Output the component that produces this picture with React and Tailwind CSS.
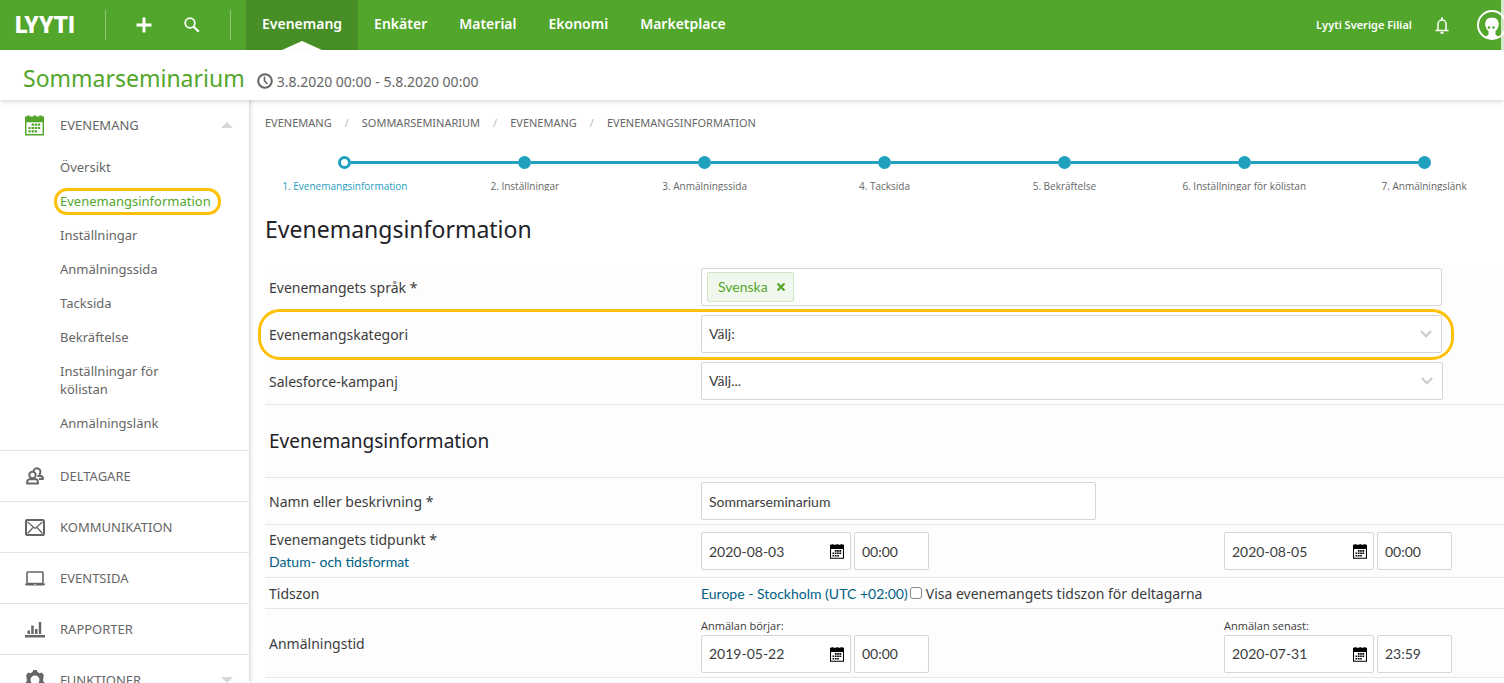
import React, { useState } from 'react';

const TOP_NAV = ['Evenemang', 'Enkäter', 'Material', 'Ekonomi', 'Marketplace'];

const SUB_NAV = [
  'Översikt',
  'Evenemangsinformation',
  'Inställningar',
  'Anmälningssida',
  'Tacksida',
  'Bekräftelse',
  'Inställningar för kölistan',
  'Anmälningslänk',
];

const BREADCRUMBS = ['Evenemang', 'Sommarseminarium', 'Evenemang', 'Evenemangsinformation'];

const STEPS = [
  '1. Evenemangsinformation',
  '2. Inställningar',
  '3. Anmälningssida',
  '4. Tacksida',
  '5. Bekräftelse',
  '6. Inställningar för kölistan',
  '7. Anmälningslänk',
];

const CalendarIcon = ({ className }) => (
  <svg viewBox="0 0 20 21" className={className} fill="currentColor" aria-hidden="true">
    <path fillRule="evenodd" d="M0 1h2V0h3v1h4V0h3v1h3V0h3v1h2v20H0V1zm1.5 6v12.5h17V7h-17z" />
    <path d="M7 8.5h2.4v2.2H7zM10.2 8.5h2.4v2.2h-2.4zM13.4 8.5H16v2.2h-2.6zM3.6 12h2.4v2.2H3.6zM7 12h2.4v2.2H7zM10.2 12h2.4v2.2h-2.4zM13.4 12H16v2.2h-2.6zM3.6 15.6h2.4v2.2H3.6zM7 15.6h2.4v2.2H7zM10.2 15.6h2.4v2.2h-2.4z" />
  </svg>
);

const PeopleIcon = () => (
  <svg viewBox="0 0 20 20" className="w-5 h-5" fill="none" stroke="currentColor" strokeWidth="2" strokeLinejoin="round" aria-hidden="true">
    <circle cx="7.500" cy="9" r="3.200" />
    <path d="M8.500 5.500a3.500 3.500 0 1 1 5.500 3.200M12.500 10h3c2 0 2.500 1.200 2.500 3h-4" />
    <path d="M4.500 13.300h6.500c1.300 0 2 1.500 2 4.200H2c0-2.700 1-4.200 2.500-4.200z" />
  </svg>
);

const MailIcon = () => (
  <svg viewBox="0 0 20 17" className="w-5 h-[17px]" fill="none" stroke="currentColor" aria-hidden="true">
    <rect x="1" y="1" width="18" height="15" rx="1" strokeWidth="2" />
    <path d="M2.500 3l7.500 6.500L17.500 3M2.500 14.500l5.500-6M17.500 14.500l-5.500-6" strokeWidth="1.300" />
  </svg>
);

const LaptopIcon = () => (
  <svg viewBox="0 0 20 15" className="w-5 h-[15px]" aria-hidden="true">
    <rect x="2" y="1" width="16" height="11.500" rx="1" fill="none" stroke="currentColor" strokeWidth="1.600" />
    <path fillRule="evenodd" d="M0 12.500h20v.8c0 .7-.8 1.200-1.500 1.200h-17C.8 14.500 0 14 0 13.300zM9 13v.8h2V13z" fill="currentColor" />
  </svg>
);

const ChartIcon = () => (
  <svg viewBox="0 0 20 17" className="w-5 h-[17px]" fill="currentColor" aria-hidden="true">
    <path d="M0 14h20v2.500H0zM2.500 9.500H5V13H2.500zM6.200 4.500h2.500V13H6.200zM10 8h2.500v5H10zM13.800 1h2.400v12h-2.400z" />
  </svg>
);

const GearIcon = () => (
  <svg viewBox="0 0 20 20" className="w-5 h-5" fill="currentColor" aria-hidden="true">
    <path fillRule="evenodd" d="M7.500 2L8.300 0h3.400l.8 2 2.200 1.200 2.200-.8 2.100 3-.6 1 .1 1.600-.5 2 .5 1.800L20 13l-1.800 3.200-2.300-.2-2.400 1.500-.8 2.500H7.300l-.8-2.500L4.100 16l-2.300.2L0 13l1.500-1.200.5-1.800-.5-2L1.600 6.400 1 5.400l2.100-3 2.200.8zM10 5.500a4.500 4.500 0 1 0 0 9 4.500 4.500 0 0 0 0-9z" />
  </svg>
);

const SECTIONS = [
  { name: 'Deltagare', icon: <PeopleIcon /> },
  { name: 'Kommunikation', icon: <MailIcon /> },
  { name: 'Eventsida', icon: <LaptopIcon /> },
  { name: 'Rapporter', icon: <ChartIcon /> },
  { name: 'Funktioner', icon: <GearIcon />, arrow: true },
];

const Topbar = () => (
  <header className="relative flex h-[50px] shrink-0 items-center bg-[#52a62b] text-white overflow-hidden">
    <a href="#" className="w-[90px] pl-[15px] font-['Roboto',sans-serif] text-[23px] font-black leading-none">LYYTI</a>
    <div className="ml-[15px] flex h-[30px] w-[126px] items-center justify-between border-x border-white/35 pl-[30px] pr-[30px]">
      <button aria-label="Lägg till">
        <svg viewBox="0 0 16 16" className="w-4 h-4" stroke="currentColor" strokeWidth="3" fill="none">
          <path d="M8 0.500v15M0.500 8h15" />
        </svg>
      </button>
      <button aria-label="Sök">
        <svg viewBox="0 0 16 16" className="w-4 h-4" stroke="currentColor" fill="none">
          <circle cx="6" cy="6" r="4.800" strokeWidth="1.800" />
          <path d="M9.500 9.500l5.300 5.300" strokeWidth="2.300" />
        </svg>
      </button>
    </div>
    <nav className="ml-[15px] flex h-full text-sm font-semibold">
      {TOP_NAV.map((item, i) => (
        <a
          key={item}
          href="#"
          className={`relative flex h-full items-center px-4 pb-[3px] ${i === 0 ? 'bg-[#468e25]' : ''}`}
        >
          {item}
          {i === 0 && (
            <svg viewBox="0 0 40 9" className="absolute bottom-0 left-1/2 h-[9px] w-10 -translate-x-1/2" fill="#fff" aria-hidden="true">
              <path d="M0 9L20 0l20 9z" />
            </svg>
          )}
        </a>
      ))}
    </nav>
    <div className="-mr-[3px] ml-auto flex items-center">
      <span className="text-[11px] font-semibold">Lyyti Sverige Filial</span>
      <button aria-label="Aviseringar" className="ml-[23px]">
        <svg viewBox="0 0 14 17" className="h-[17px] w-[14px]" fill="none" stroke="currentColor" strokeWidth="1.500" aria-hidden="true">
          <path d="M3 13V7a4 4 0 0 1 8 0v6M.5 13.500h13" />
          <path d="M7 0.500v2M5.500 15.700h3" strokeWidth="2" />
        </svg>
      </button>
      <button aria-label="Profil" className="ml-7">
        <svg viewBox="0 0 30 30" className="h-[30px] w-[30px]" aria-hidden="true">
          <circle cx="15" cy="15" r="14" fill="none" stroke="#fff" strokeWidth="2" />
          <path d="M15 7.500c4.200 0 6.800 2.800 6.800 6.500 0 3-1.500 5.300-3.300 7.200v3.500l3.500 2.300c-2 1.500-4.500 2-7 2s-5-.5-7-2l3.500-2.300v-3.500C9.700 19.300 8.200 17 8.200 14c0-3.700 2.600-6.500 6.800-6.500z" fill="#fff" />
          <circle cx="12" cy="17.500" r="1.300" fill="#52a62b" />
          <circle cx="16.500" cy="17.500" r="1.300" fill="#52a62b" />
        </svg>
      </button>
    </div>
    <div className="absolute inset-y-0 right-0 w-[3px] bg-white/75" />
  </header>
);

const Arrow = ({ up }) => (
  <svg viewBox="0 0 12 6" className="ml-auto h-[6px] w-3" fill="#d8d8d8" aria-hidden="true">
    <path d={up ? 'M0 6l6-6 6 6z' : 'M0 0l6 6 6-6z'} />
  </svg>
);

const Sidebar = () => (
  <aside className="w-[249px] shrink-0 bg-white text-[13px] text-[#666] shadow-[1px_0_4px_rgba(0,0,0,0.2)]">
    <button className="flex h-[50px] w-full items-center pl-[25px] pr-4 uppercase">
      <CalendarIcon className="h-[21px] w-[19px] text-[#52a62b]" />
      <span className="ml-4 pt-[2px]">Evenemang</span>
      <Arrow up />
    </button>
    <ul className="pb-[10px] pl-[60px] pr-[50px] leading-[18px]">
      {SUB_NAV.map((item, i) => (
        <li key={item} className="relative py-2">
          {i === 1 && (
            <div className="pointer-events-none absolute -left-[6px] top-1 h-[27px] w-[167px] rounded-[13px] border-[3px] border-[#ffc107]" />
          )}
          <a href="#" className={i === 1 ? 'text-[#52a62b] whitespace-nowrap' : ''}>{item}</a>
        </li>
      ))}
    </ul>
    {SECTIONS.map((s) => (
      <button key={s.name} className="flex h-[51px] w-full items-center border-t border-[#e4e4e4] pl-[25px] pr-4 uppercase">
        {s.icon}
        <span className="ml-[15px] pt-[2px]">{s.name}</span>
        {s.arrow && <Arrow />}
      </button>
    ))}
  </aside>
);

const Steps = () => (
  <ol className="-mx-[10px] mt-[25px] flex">
    {STEPS.map((step, i) => (
      <li key={step} className="flex flex-1 flex-col items-center">
        <div className="flex w-full items-center">
          <div className={`h-[3px] flex-1 ${i === 0 ? '' : 'bg-[#1fa0be]'}`} />
          <div className={`h-[13px] w-[13px] rounded-full border-[3px] border-[#1fa0be] ${i === 0 ? 'bg-white' : 'bg-[#1fa0be]'}`} />
          <div className={`h-[3px] flex-1 ${i === STEPS.length - 1 ? '' : 'bg-[#1fa0be]'}`} />
        </div>
        <a
          href="#"
          className={`mt-[11px] block h-[11px] overflow-hidden whitespace-nowrap font-['Open_Sans',sans-serif] text-[10px] leading-[13px] ${i === 0 ? 'text-[#1fa0be]' : 'text-[#666]'}`}
        >
          {step}
        </a>
      </li>
    ))}
  </ol>
);

const inputStyle = "h-[38px] rounded-[2px] border border-[#d6d6d6] bg-white px-[7px] font-['Lato',sans-serif] text-sm text-[#3c3c3c]";

const Select = ({ id, text }) => (
  <div className="relative">
    <select id={id} className={`${inputStyle} block w-full appearance-none`}>
      <option>{text}</option>
    </select>
    <svg viewBox="0 0 12 8" className="pointer-events-none absolute right-[10px] top-[15px] h-2 w-3" fill="none" stroke="#ccc" strokeWidth="2.200" aria-hidden="true">
      <path d="M0.800 1L6 6.200 11.200 1" />
    </svg>
  </div>
);

const DateTime = ({ name, date, time, caption }) => (
  <div>
    {caption && (
      <label htmlFor={`${name}-date`} className="block h-[17px] font-['Open_Sans',sans-serif] text-[11px] leading-4">{caption}</label>
    )}
    <div className="flex gap-[3px]">
      <div className="relative">
        <input id={`${name}-date`} aria-label={caption || 'Datum'} defaultValue={date} className={`${inputStyle} block w-[150px]`} />
        <CalendarIcon className="pointer-events-none absolute right-[7px] top-3 h-[15px] w-[14px] text-black" />
      </div>
      <input aria-label="Klockslag" defaultValue={time} className={`${inputStyle} w-[75px]`} />
    </div>
  </div>
);

const Row = ({ label, htmlFor, className = '', children }) => (
  <div className={`grid grid-cols-[436px_1fr] items-center ${className}`}>
    <div className="pl-1">{htmlFor ? <label htmlFor={htmlFor}>{label}</label> : label}</div>
    <div>{children}</div>
  </div>
);

const App = () => {
  const [languages, setLanguages] = useState(['Svenska']);

  return (
    <div className="flex h-screen flex-col overflow-hidden bg-white font-['Noto_Sans','Open_Sans',sans-serif] text-[#3c3c3c]">
      <Topbar />

      <div className="relative z-10 flex h-[50px] shrink-0 items-baseline bg-white pl-[23px] pt-3 shadow-[0_2px_4px_rgba(0,0,0,0.14)]">
        <h2 className="text-[23px] leading-8 text-[#52a62b]">Sommarseminarium</h2>
        <svg viewBox="0 0 16 16" className="ml-3 h-4 w-4 self-center" fill="none" stroke="#666" strokeWidth="2" aria-hidden="true">
          <circle cx="8" cy="8" r="6.800" />
          <path d="M7.500 3.500V8l3 3" strokeWidth="1.600" />
        </svg>
        <span className="ml-1 text-sm text-[#666]">3.8.2020 00:00 - 5.8.2020 00:00</span>
      </div>

      <div className="flex min-h-0 flex-1">
        <Sidebar />

        <main className="min-w-0 flex-1 pl-4">
          <nav className="flex pt-[15px] text-[11px] uppercase leading-4 text-[#666]">
            {BREADCRUMBS.map((crumb, i) => (
              <React.Fragment key={i}>
                {i > 0 && <span className="mx-[13px] text-[#bbb]">/</span>}
                <a href="#">{crumb}</a>
              </React.Fragment>
            ))}
          </nav>

          <Steps />

          <h1 className="mt-[22px] text-[23px] leading-8 text-[#1f2328]">Evenemangsinformation</h1>

          <form className="mt-[19px] bg-[#fdfdfd] text-[14px]">
            {/* Språk, kategori och kampanj */}
            <div className="border-b border-[#e6e6e6]">
              <Row label="Evenemangets språk *" className="h-[46px]">
                <div className="mr-[62px] flex h-[38px] items-center rounded-[2px] border border-[#d6d6d6] bg-white pl-[5px]">
                  {languages.map((lang) => (
                    <span key={lang} className="flex h-[30px] items-center rounded-[2px] border border-[#cfe6c5] bg-[#f0f8ed] pl-[10px] pr-2 font-['Lato',sans-serif] text-sm text-[#52a62b]">
                      {lang}
                      <button type="button" aria-label={`Ta bort ${lang}`} className="ml-[9px]" onClick={() => setLanguages(languages.filter((l) => l !== lang))}>
                        <svg viewBox="0 0 8 8" className="h-2 w-2" stroke="currentColor" strokeWidth="2.200">
                          <path d="M0.500 0.500l7 7M7.500 0.500l-7 7" />
                        </svg>
                      </button>
                    </span>
                  ))}
                </div>
              </Row>
              <div className="relative">
                <Row label="Evenemangskategori" htmlFor="category" className="h-12">
                  <div className="mr-[62px]"><Select id="category" text="Välj:" /></div>
                </Row>
                <div className="pointer-events-none absolute -bottom-[2px] -left-[7px] right-[50px] -top-[1px] rounded-[22px] border-[3px] border-[#ffc107]" />
              </div>
              <Row label="Salesforce-kampanj" htmlFor="campaign" className="h-[46px]">
                <div className="mr-[61px]"><Select id="campaign" text="Välj..." /></div>
              </Row>
            </div>

            <h2 className="flex h-[73px] items-center border-b border-[#e6e6e6] pl-1 text-[19px] text-[#1f2328]">Evenemangsinformation</h2>

            <Row label="Namn eller beskrivning *" htmlFor="name" className="h-[47px] border-b border-[#e6e6e6]">
              <input id="name" defaultValue="Sommarseminarium" className={`${inputStyle} block w-[395px]`} />
            </Row>

            <Row
              label={
                <>
                  <div className="leading-[22px]">Evenemangets tidpunkt *</div>
                  <a href="#" className="block font-['Lato',sans-serif] leading-[22px] text-[#005f85]">Datum- och tidsformat</a>
                </>
              }
              className="h-[53px] border-b border-[#e6e6e6]"
            >
              <div className="grid grid-cols-[523px_1fr]">
                <DateTime name="start" date="2020-08-03" time="00:00" />
                <DateTime name="end" date="2020-08-05" time="00:00" />
              </div>
            </Row>

            <Row label="Tidszon" className="h-[31px] border-b border-[#e6e6e6]">
              <div className="flex items-center">
                <a href="#" className="font-['Lato',sans-serif] text-[#005f85]">Europe - Stockholm (UTC +02:00)</a>
                <input id="show-tz" type="checkbox" className="ml-[2px] h-3 w-3 appearance-none rounded-[3px] border border-[#888] bg-white checked:bg-[#52a62b]" />
                <label htmlFor="show-tz" className="ml-1">Visa evenemangets tidszon för deltagarna</label>
              </div>
            </Row>

            <Row label="Anmälningstid" className="h-[69px] border-b border-[#e6e6e6]">
              <div className="grid grid-cols-[523px_1fr] pt-1">
                <DateTime name="reg-start" caption="Anmälan börjar:" date="2019-05-22" time="00:00" />
                <DateTime name="reg-end" caption="Anmälan senast:" date="2020-07-31" time="23:59" />
              </div>
            </Row>
          </form>
        </main>
      </div>
    </div>
  );
};

export default App;
